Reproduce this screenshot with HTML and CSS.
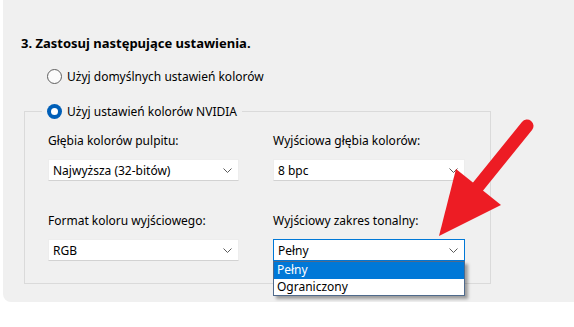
FILE: index.html
```html
<!DOCTYPE html>
<html>
<head>
  <meta charset="UTF-8">
  <title>Ustawienia kolorów</title>
  <link rel="stylesheet" href="styles.css">
</head>
<body>
  <div class="panel">
    <h2 class="step-title">3. Zastosuj następujące ustawienia.</h2>

    <div class="radio-row option-default">
      <span class="radio"></span>
      <span>Użyj domyślnych ustawień kolorów</span>
    </div>

    <div class="group">
      <div class="legend radio-row">
        <span class="radio checked"></span>
        <span>Użyj ustawień kolorów NVIDIA</span>
      </div>

      <div class="fields">
        <div class="field">
          <div class="field-label">Głębia kolorów pulpitu:</div>
          <div class="combo">
            <span>Najwyższa (32-bitów)</span>
            <svg class="chevron" width="9" height="5" viewBox="0 0 9 5"><path d="M0.5 0.5 L4.5 4.5 L8.5 0.5" fill="none" stroke="#5a5a5a" stroke-width="1"/></svg>
          </div>
        </div>
        <div class="field">
          <div class="field-label">Wyjściowa głębia kolorów:</div>
          <div class="combo">
            <span>8 bpc</span>
            <svg class="chevron" width="9" height="5" viewBox="0 0 9 5"><path d="M0.5 0.5 L4.5 4.5 L8.5 0.5" fill="none" stroke="#5a5a5a" stroke-width="1"/></svg>
          </div>
        </div>
        <div class="field">
          <div class="field-label">Format koloru wyjściowego:</div>
          <div class="combo">
            <span>RGB</span>
            <svg class="chevron" width="9" height="5" viewBox="0 0 9 5"><path d="M0.5 0.5 L4.5 4.5 L8.5 0.5" fill="none" stroke="#5a5a5a" stroke-width="1"/></svg>
          </div>
        </div>
        <div class="field">
          <div class="field-label">Wyjściowy zakres tonalny:</div>
          <div class="combo open">
            <span>Pełny</span>
            <svg class="chevron" width="9" height="5" viewBox="0 0 9 5"><path d="M0.5 0.5 L4.5 4.5 L8.5 0.5" fill="none" stroke="#5a5a5a" stroke-width="1"/></svg>
            <ul class="dropdown">
              <li class="selected">Pełny</li>
              <li>Ograniczony</li>
            </ul>
          </div>
        </div>
      </div>
    </div>
  </div>

  <!-- red pointer drawn over the screenshot -->
  <svg class="pointer" width="574" height="327" viewBox="0 0 574 327">
    <line x1="527" y1="126" x2="472" y2="194" stroke="#ed1c24" stroke-width="13" stroke-linecap="round"/>
    <polygon points="456,169 501,205 439,236" fill="#ed1c24"/>
  </svg>
</body>
</html>
```

FILE: styles.css
```css
/* Page base */
body {
  margin: 0;
  background: #fff;
  font-family: "Noto Sans", "Open Sans", sans-serif;
  font-size: 12px;
  color: #000;
}
/* Grey settings panel */
.panel {
  margin-left: 3px;
  height: 302px;
  box-sizing: border-box;
  padding: 34px 0 0 18px;
  background: #f0f0f0;
  border-bottom-left-radius: 8px;
}
.step-title {
  margin: 0;
  font-size: 13px;
  line-height: 18px;
  font-weight: bold;
}
.radio-row {
  display: flex;
  align-items: center;
  gap: 5px;
  height: 20px;
}
.option-default {
  margin: 14px 0 0 26px;
}
.radio {
  width: 13px;
  height: 13px;
  border: 1px solid #5f5f5f;
  border-radius: 50%;
  background: #fbfbfb;
}
.radio.checked {
  width: 15px;
  height: 15px;
  border: none;
  background: #005fb8;
  position: relative;
}
.radio.checked::after {
  content: "";
  position: absolute;
  left: 4px;
  top: 4px;
  width: 7px;
  height: 7px;
  border-radius: 50%;
  background: #fff;
}
/* Group box with radio as legend */
.group {
  margin: 25px 0 0 3px;
  width: 467px;
  box-sizing: border-box;
  border: 1px solid #dadada;
  padding-bottom: 22px;
}
.legend {
  width: fit-content;
  margin: -11px 0 0 17px;
  padding: 0 5px 0 5px;
  background: #f0f0f0;
}
.fields {
  display: grid;
  grid-template-columns: 191px 192px;
  column-gap: 34px;
  row-gap: 31px;
  padding: 11px 0 0 23px;
}
.field-label {
  line-height: 18px;
  margin-bottom: 9px;
}
.combo {
  position: relative;
  height: 22px;
  box-sizing: border-box;
  display: flex;
  align-items: center;
  justify-content: space-between;
  padding: 0 6px 0 4px;
  background: #fff;
  border: 1px solid #ededed;
  border-bottom-color: #d2d2d2;
}
.combo.open {
  border-color: #0078d7;
}
.dropdown {
  position: absolute;
  left: -1px;
  right: -1px;
  top: 21px;
  margin: 0;
  padding: 0;
  list-style: none;
  background: #fff;
  border: 1px solid #4f6a8c;
  box-shadow: 3px 3px 3px rgba(0, 0, 0, 0.35);
}
.dropdown li {
  height: 16px;
  line-height: 16px;
  padding-left: 3px;
}
.dropdown li.selected {
  height: 17px;
  background: #0078d7;
  color: #fff;
}
/* Red arrow overlay */
.pointer {
  position: absolute;
  left: 0;
  top: 0;
  pointer-events: none;
}
```
